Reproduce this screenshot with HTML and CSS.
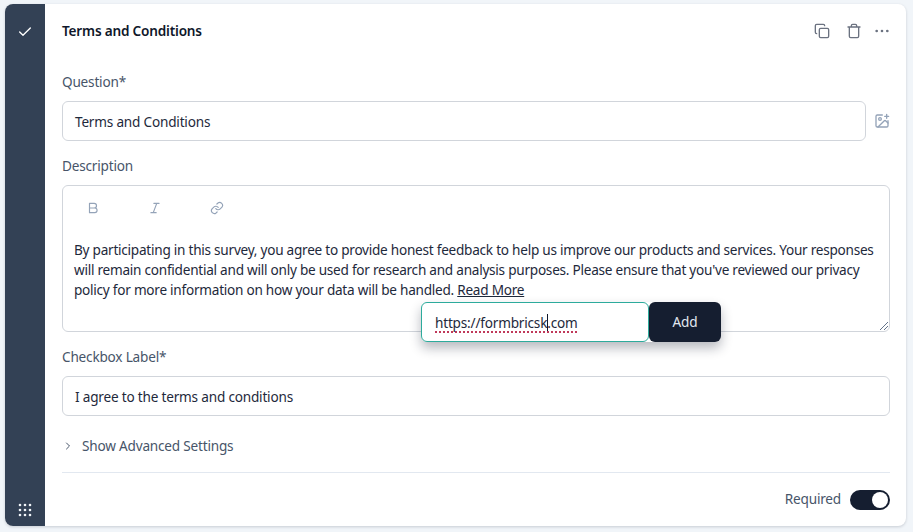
FILE: index.html
```html
<!DOCTYPE html>
<html lang="en">
<head>
<meta charset="utf-8">
<title>Terms and Conditions</title>
<link rel="stylesheet" href="styles.css">
</head>
<body>
<div class="card">
  <aside class="rail">
    <svg class="check" viewBox="0 0 24 24" width="16" height="16"><path d="M20 6 9 17l-5-5"/></svg>
    <svg class="grip" viewBox="0 0 14 14" width="14" height="14"><g>
      <circle cx="2" cy="2" r="1.3"/><circle cx="7" cy="2" r="1.3"/><circle cx="12" cy="2" r="1.3"/>
      <circle cx="2" cy="7" r="1.3"/><circle cx="7" cy="7" r="1.3"/><circle cx="12" cy="7" r="1.3"/>
      <circle cx="2" cy="12" r="1.3"/><circle cx="7" cy="12" r="1.3"/><circle cx="12" cy="12" r="1.3"/>
    </g></svg>
  </aside>
  <main class="content">
    <header class="head">
      <h1 class="title">Terms and Conditions</h1>
      <div class="actions">
        <svg class="ico copy" viewBox="0 0 24 24" width="16" height="16"><rect x="8" y="8" width="14" height="14" rx="2"/><path d="M4 16c-1.1 0-2-.9-2-2V4c0-1.1.9-2 2-2h10c1.1 0 2 .9 2 2"/></svg>
        <svg class="ico" viewBox="0 0 24 24" width="16" height="16"><path d="M3 6h18M19 6v14c0 1-1 2-2 2H7c-1 0-2-1-2-2V6M8 6V4c0-1 1-2 2-2h4c1 0 2 1 2 2v2"/></svg>
        <svg class="ico dots" viewBox="0 0 24 24" width="16" height="16"><circle cx="4" cy="12" r="1"/><circle cx="12" cy="12" r="1"/><circle cx="20" cy="12" r="1"/></svg>
      </div>
    </header>

    <label class="label first">Question*</label>
    <div class="row">
      <div class="input grow">Terms and Conditions</div>
      <svg class="ico img" viewBox="0 0 24 24" width="16" height="16"><path d="M16 5h6M19 2v6M21 11.5V19a2 2 0 0 1-2 2H5a2 2 0 0 1-2-2V5a2 2 0 0 1 2-2h7.5"/><path d="m21 15-3.1-3.1a2 2 0 0 0-2.8 0L6 21"/><circle cx="9" cy="9" r="2"/></svg>
    </div>

    <label class="label">Description</label>
    <div class="editor">
      <div class="toolbar">
        <svg class="tool" viewBox="0 0 24 24" width="14" height="14"><path d="M6 4h8a4 4 0 0 1 0 8H6zM6 12h9a4 4 0 0 1 0 8H6z"/></svg>
        <svg class="tool" viewBox="0 0 24 24" width="14" height="14"><path d="M19 4h-9M14 20H5M15 4 9 20"/></svg>
        <svg class="tool" viewBox="0 0 24 24" width="14" height="14"><path d="M10 13a5 5 0 0 0 7.5.5l3-3a5 5 0 0 0-7-7l-1.7 1.7"/><path d="M14 11a5 5 0 0 0-7.5-.5l-3 3a5 5 0 0 0 7 7l1.7-1.7"/></svg>
      </div>
      <p class="body">By participating in this survey, you agree to provide honest feedback to help us improve our products and services. Your responses will remain confidential and will only be used for research and analysis purposes. Please ensure that you've reviewed our privacy policy for more information on how your data will be handled. <a class="more">Read More</a></p>
      <svg class="resize" viewBox="0 0 8 8" width="8" height="8"><path d="M0 8 8 0M4 8l4-4"/></svg>
    </div>

    <label class="label">Checkbox Label*</label>
    <div class="input">I agree to the terms and conditions</div>

    <div class="advanced">
      <svg class="chev" viewBox="0 0 24 24" width="12" height="12"><path d="m9 6 6 6-6 6"/></svg>
      <span>Show Advanced Settings</span>
    </div>

    <footer class="foot">
      <span class="req">Required</span>
      <span class="toggle"><span class="knob"></span></span>
    </footer>

    <div class="popup">
      <div class="url"><span class="typed">https://formbricsk<i class="caret"></i>.com</span></div>
      <button class="add">Add</button>
    </div>
  </main>
</div>
</body>
</html>
```
FILE: styles.css
```css
* { box-sizing: border-box; }
html, body { margin: 0; height: 100%; }
body {
  background: #f1f5f9;
  padding: 4px 7px 6px 5px;
  font-family: "Noto Sans", sans-serif;
  font-size: 13.6px;
  letter-spacing: -.2px;
  line-height: 20px;
  color: #1e293b;
  overflow: hidden;
}
.card {
  display: flex;
  height: 522px;
  background: #fff;
  border-radius: 8px;
  overflow: hidden;
  box-shadow: 0 1px 3px rgba(15, 23, 42, .18);
}
.rail {
  width: 40px;
  flex: none;
  background: #334155;
  display: flex;
  flex-direction: column;
  align-items: center;
  justify-content: space-between;
  padding: 20px 0 9px;
}
.check { fill: none; stroke: #fff; stroke-width: 2; stroke-linecap: round; stroke-linejoin: round; }
.grip { fill: #f1f5f9; }
.content {
  position: relative;
  flex: 1;
  min-width: 0;
  padding: 0 16px 0 17px;
}
.head {
  display: flex;
  align-items: center;
  justify-content: space-between;
  height: 54px;
}
.title { margin: 0; font-size: 13.6px; font-weight: 600; line-height: 54px; color: #0f172a; }
.actions { display: flex; gap: 12px; }
.copy { margin-right: 4px; }
.ico { fill: none; stroke: #6b7280; stroke-width: 2; stroke-linecap: round; stroke-linejoin: round; }
.dots { fill: #6b7280; stroke: #6b7280; }
.label { display: block; margin: 0; padding-top: 15px; height: 44px; line-height: 20px; color: #475569; padding-bottom: 9px; }
.label.first { padding-top: 14px; height: 43px; }
.row { display: flex; align-items: center; gap: 8px; }
.img { stroke: #94a3b8; }
.grow { flex: 1; min-width: 0; }
.input {
  height: 40px;
  border: 1px solid #d1d5db;
  border-radius: 6px;
  padding: 2px 12px 0;
  display: flex;
  align-items: center;
}
.editor {
  position: relative;
  height: 147px;
  border: 1px solid #d1d5db;
  border-radius: 6px;
}
.toolbar { display: flex; gap: 48px; padding: 15px 0 0 23px; height: 54px; }
.tool { fill: none; stroke: #94a3b8; stroke-width: 2; stroke-linecap: round; stroke-linejoin: round; }
.body { margin: 0; padding: 0 11px; letter-spacing: -.25px; }
.more { text-decoration: underline; }
.resize { position: absolute; right: 1px; bottom: 1px; fill: none; stroke: #64748b; stroke-width: 1; }
.advanced {
  display: flex;
  align-items: center;
  gap: 8px;
  height: 57px;
  padding: 4px 0 0 0;
  border-bottom: 1px solid #e2e8f0;
  color: #475569;
}
.chev { fill: none; stroke: #475569; stroke-width: 2; stroke-linecap: round; stroke-linejoin: round; }
.foot {
  display: flex;
  align-items: center;
  justify-content: flex-end;
  gap: 9px;
  height: 53px;
  color: #475569;
}
.req { position: relative; bottom: 1px; }
.toggle {
  width: 40px;
  height: 20px;
  border-radius: 10px;
  background: #151e30;
  display: flex;
  align-items: center;
  justify-content: flex-end;
  padding: 2px;
}
.knob { width: 16px; height: 16px; border-radius: 50%; background: #fff; }
.popup {
  position: absolute;
  left: 376px;
  top: 298px;
  display: flex;
  height: 40px;
  border-radius: 6px;
  box-shadow: 0 6px 12px rgba(15, 23, 42, .3);
}
.url {
  width: 228px;
  height: 40px;
  background: #fff;
  border: 1px solid #2dab9c;
  border-radius: 6px;
  padding: 2px 13px 0;
  display: flex;
  align-items: center;
}
.typed {
  text-decoration: underline dotted #c0395a 1.5px;
  text-underline-offset: 3px;
}
.caret {
  display: inline-block;
  width: 1px;
  height: 17px;
  margin: 0 -1px 0 0;
  vertical-align: -3px;
  background: #0f172a;
}
.add {
  width: 72px;
  height: 40px;
  border: 0;
  border-radius: 6px;
  background: #151e30;
  color: #e2e8f0;
  font: inherit;
  letter-spacing: inherit;
}
```
